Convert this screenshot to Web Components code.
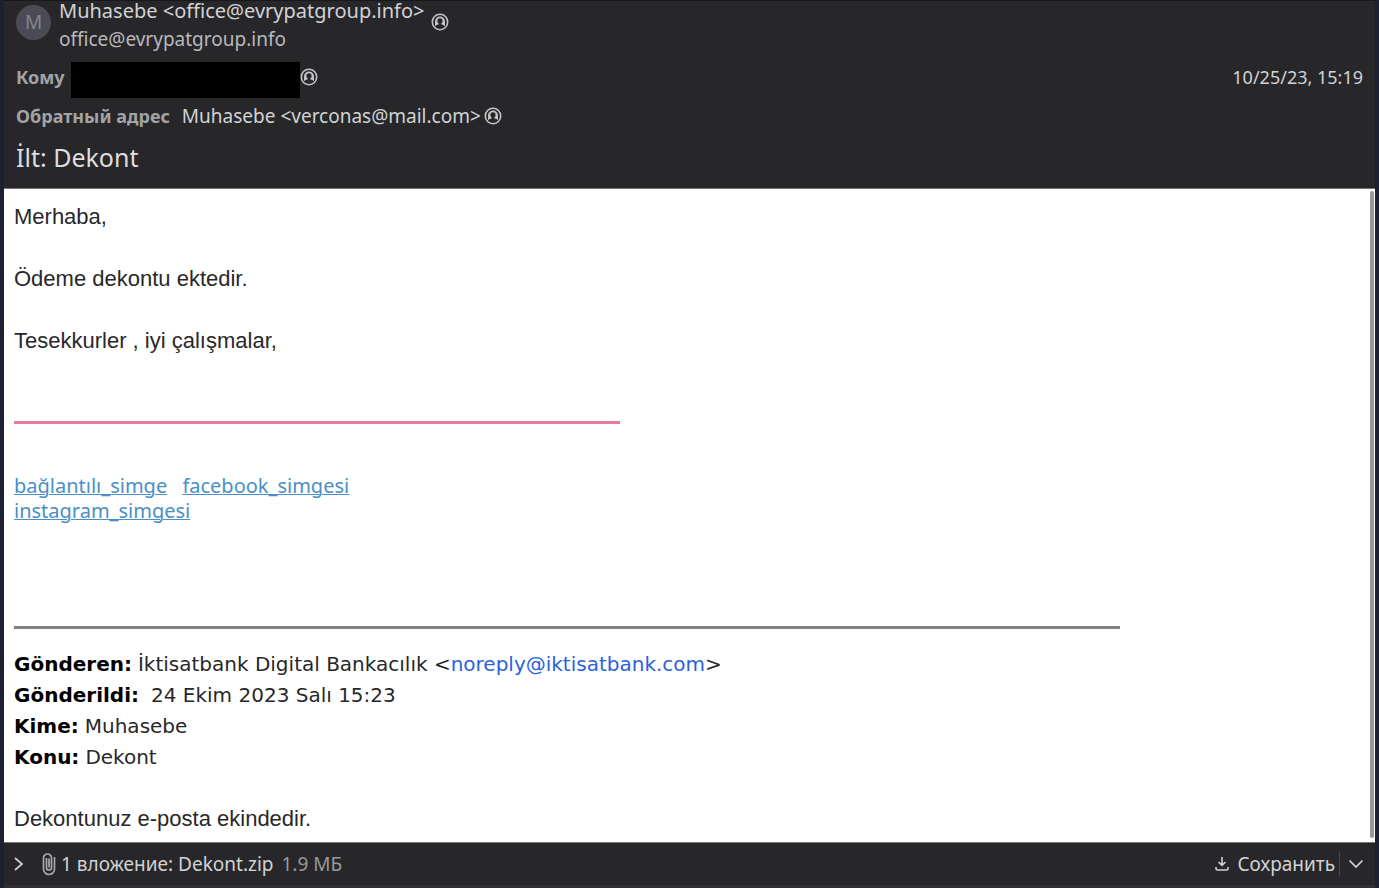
<!DOCTYPE html>
<html lang="ru">
<head>
<meta charset="utf-8">
<title>İlt: Dekont</title>
<style>
	body {
		margin: 0;
		background: #1d2030;
		font-family: "Noto Sans", sans-serif;
	}
</style>
</head>
<body>
<mail-window>
	<mail-header slot="header">
		<mail-sender slot="sender" initial="M">
			<span slot="name">Muhasebe &lt;office@evrypatgroup.info&gt;</span>
			<span slot="address">office@evrypatgroup.info</span>
		</mail-sender>
		<mail-field slot="fields" label="Кому" redacted>
			<time slot="end" datetime="2023-10-25T15:19">10/25/23, 15:19</time>
		</mail-field>
		<mail-field slot="fields" label="Обратный адрес">Muhasebe &lt;verconas@mail.com&gt;</mail-field>
		<span slot="subject">İlt: Dekont</span>
	</mail-header>
	<mail-message></mail-message>
	<mail-attachments slot="footer" name="Dekont.zip" size="1.9 МБ"></mail-attachments>
</mail-window>

<script>
class MailWindow extends HTMLElement {
	constructor() {
		super();
		this.attachShadow({ mode: 'open' });
		this.shadowRoot.innerHTML = `
			<style>
				:host {
					display: flex;
					flex-direction: column;
					box-sizing: border-box;
					min-height: 100vh;
					padding: 0 4px;
				}
				main {
					display: flex;
					flex: 1;
					background: #fff;
				}
				.content {
					flex: 1;
					min-width: 0;
				}
				.scrollbar {
					width: 4px;
					margin: 2px 1px 4px 0;
					border-radius: 2px;
					background: #98989a;
				}
			</style>
			<slot name="header"></slot>
			<main>
				<div class="content"><slot></slot></div>
				<div class="scrollbar"></div>
			</main>
			<slot name="footer"></slot>
		`;
	}
}

class MailHeader extends HTMLElement {
	constructor() {
		super();
		this.attachShadow({ mode: 'open' });
		this.shadowRoot.innerHTML = `
			<style>
				:host {
					display: block;
					padding: 0 12px 14px;
					border-top: 1px solid #18181c;
					border-bottom: 1px solid #77777a;
					background: #27272a;
					color: #d2d2d4;
					font-size: 19px;
				}
				.fields {
					display: flex;
					flex-direction: column;
					gap: 3px;
					margin-top: 13px;
				}
				h1 {
					margin: 10px 0 0;
					padding-bottom: 1px;
					font-size: 25px;
					font-weight: 400;
					line-height: 32px;
					color: #dededf;
				}
			</style>
			<slot name="sender"></slot>
			<div class="fields"><slot name="fields"></slot></div>
			<h1><slot name="subject"></slot></h1>
		`;
	}
}

class MailSender extends HTMLElement {
	constructor() {
		super();
		this.attachShadow({ mode: 'open' });
		this.shadowRoot.innerHTML = `
			<style>
				:host {
					display: flex;
					align-items: center;
				}
				.avatar {
					display: flex;
					align-items: center;
					justify-content: center;
					width: 35px;
					height: 35px;
					margin: 0 8px 6px 0;
					border-radius: 50%;
					background: #4b4b55;
					color: #85858f;
				}
				.names {
					display: flex;
					flex-direction: column;
					gap: 8px;
					font-size: 20px;
					line-height: 20px;
				}
				.address {
					color: #b9b9bc;
					font-size: 19px;
				}
				contact-button {
					margin: 0 0 6px 6px;
				}
			</style>
			<div class="avatar">${this.getAttribute('initial')}</div>
			<div class="names">
				<slot name="name"></slot>
				<div class="address"><slot name="address"></slot></div>
			</div>
			<contact-button></contact-button>
		`;
	}
}

class MailField extends HTMLElement {
	constructor() {
		super();
		const redacted = this.hasAttribute('redacted');
		this.attachShadow({ mode: 'open' });
		this.shadowRoot.innerHTML = `
			<style>
				:host {
					display: flex;
					line-height: 30px;
				}
				.label {
					margin-right: 12px;
					color: #a3a3a6;
					font-size: 18px;
					font-weight: 700;
				}
				:host([redacted]) .label {
					margin-right: 6px;
				}
				.redacted {
					width: 229px;
					height: 36px;
					background: #000;
				}
				contact-button {
					height: 30px;
					margin-left: 3px;
				}
				:host([redacted]) contact-button {
					margin-left: 0;
				}
				.end {
					margin-left: auto;
					font-size: 18px;
				}
			</style>
			<span class="label">${this.getAttribute('label')}</span>
			${redacted ? '<div class="redacted"></div>' : '<span><slot></slot></span>'}
			<contact-button></contact-button>
			<span class="end"><slot name="end"></slot></span>
		`;
	}
}

class ContactButton extends HTMLElement {
	constructor() {
		super();
		this.attachShadow({ mode: 'open' });
		this.shadowRoot.innerHTML = `
			<style>
				:host {
					display: flex;
					align-items: center;
				}
				button {
					display: block;
					padding: 0;
					border: 0;
					background: none;
					color: #c4c4c6;
				}
				svg {
					display: block;
				}
			</style>
			<button type="button" aria-label="Контакт">
				<svg width="18" height="18" viewBox="0 0 18 18">
					<circle cx="9" cy="9" r="7.7" fill="none" stroke="currentColor" stroke-width="1.6"/>
					<path d="M4 13V8.500a5 5 0 0 1 10 0V13z" fill="currentColor"/>
					<path d="M9 5.300a2.600 2.600 0 0 1 2.600 2.700c0 1.200-.5 1.900-1.300 2.500v.8l3 1.200v1.600H4.700v-1.600l3-1.200v-.8C6.900 9.900 6.400 9.200 6.400 8A2.600 2.600 0 0 1 9 5.300z" fill="#27272a"/>
				</svg>
			</button>
		`;
	}
}

class MailMessage extends HTMLElement {
	constructor() {
		super();
		this.attachShadow({ mode: 'open' });
		this.shadowRoot.innerHTML = `
			<style>
				:host {
					display: block;
					padding: 12px 10px 7px;
					color: #28282a;
					font: 22px/31px "Liberation Sans", Arial, sans-serif;
				}
				p {
					margin: 0 0 31px;
				}
				hr {
					margin: 0;
					border: 0;
					height: 3px;
				}
				.signature {
					max-width: 606px;
					margin-top: 65px;
					background: #e87a9c;
				}
				.quote {
					max-width: 1106px;
					margin-top: 103px;
					background: #808080;
				}
				.links {
					margin-top: 49px;
					font: 20px/25px "Noto Sans", sans-serif;
				}
				.links a {
					color: #4a8fc7;
					text-decoration-thickness: 1px;
					text-underline-offset: 1px;
				}
				.links a + a {
					margin-left: 10px;
				}
				dl {
					margin: 20px 0 30px;
					font: 20px/31px "DejaVu Sans", sans-serif;
				}
				dl div {
					display: flex;
					flex-wrap: wrap;
					gap: 0 6px;
				}
				dl .sent {
					gap: 0 12px;
				}
				dt {
					color: #000;
					font-weight: 700;
				}
				dd {
					margin: 0;
				}
				dd a {
					color: #2a62dd;
					text-decoration: none;
				}
				.last {
					margin: 0;
				}
			</style>
			<p>Merhaba,</p>
			<p>Ödeme dekontu ektedir.</p>
			<p>Tesekkurler , iyi çalışmalar,</p>
			<hr class="signature">
			<div class="links">
				<div><a href="#link">bağlantılı_simge</a> <a href="#facebook">facebook_simgesi</a></div>
				<div><a href="#instagram">instagram_simgesi</a></div>
			</div>
			<hr class="quote">
			<dl>
				<div><dt>Gönderen:</dt><dd>İktisatbank Digital Bankacılık &lt;<a href="mailto:noreply@iktisatbank.com">noreply@iktisatbank.com</a>&gt;</dd></div>
				<div class="sent"><dt>Gönderildi:</dt><dd>24 Ekim 2023 Salı 15:23</dd></div>
				<div><dt>Kime:</dt><dd>Muhasebe</dd></div>
				<div><dt>Konu:</dt><dd>Dekont</dd></div>
			</dl>
			<p class="last">Dekontunuz e-posta ekindedir.</p>
		`;
	}
}

class MailAttachments extends HTMLElement {
	constructor() {
		super();
		this.attachShadow({ mode: 'open' });
		this.shadowRoot.innerHTML = `
			<style>
				:host {
					display: flex;
					align-items: center;
					justify-content: space-between;
					padding: 6px 11px 6px 8px;
					border-top: 1px solid #77777a;
					border-bottom: 3px solid #303034;
					background: #27272a;
					color: #d2d2d4;
					font-size: 19px;
					line-height: 30px;
				}
				button {
					display: flex;
					align-items: center;
					padding: 0;
					border: 0;
					background: none;
					color: inherit;
					font: inherit;
				}
				.expand svg:first-child {
					margin-right: 16px;
				}
				.expand svg + svg {
					margin-right: 5px;
				}
				.size {
					margin-left: 8px;
					color: #98989b;
				}
				.actions {
					display: flex;
					align-items: center;
				}
				.save {
					gap: 8px;
				}
				.menu {
					padding: 4px 0 4px 8px;
					margin-left: 4px;
					border-left: 1px solid #48484c;
				}
			</style>
			<button type="button" class="expand" aria-expanded="false">
				<svg width="14" height="18" viewBox="0 0 14 18" fill="none" stroke="currentColor" stroke-width="1.700">
					<path d="M3 3l7 6l-7 6"/>
				</svg>
				<svg width="14" height="24" viewBox="0 0 14 24" fill="none" stroke="#a9a9ac" stroke-width="1.700">
					<path d="M4.500 6v9.500a2.500 2.500 0 0 0 5 0V6a4 4 0 0 0-4-4A4 4 0 0 0 1.500 6v11a5.500 5.500 0 0 0 11 0V5M7 6.500v9"/>
				</svg>
				<span>1 вложение: ${this.getAttribute('name')}</span>
				<span class="size">${this.getAttribute('size')}</span>
			</button>
			<div class="actions">
				<button type="button" class="save">
					<svg width="14" height="16" viewBox="0 0 14 16" fill="none" stroke="currentColor" stroke-width="1.600">
						<path d="M7 1v8M3.500 6L7 9.300L10.500 6M1 11v1.500q0 1.500 1.500 1.500h9q1.500 0 1.500-1.500V11"/>
					</svg>
					<span>Сохранить</span>
				</button>
				<button type="button" class="menu" aria-label="Другие действия">
					<svg width="16" height="16" viewBox="0 0 16 16" fill="none" stroke="currentColor" stroke-width="1.700">
						<path d="M1.500 4.500L8 11l6.500-6.500"/>
					</svg>
				</button>
			</div>
		`;
	}
}

customElements.define('contact-button', ContactButton);
customElements.define('mail-sender', MailSender);
customElements.define('mail-field', MailField);
customElements.define('mail-header', MailHeader);
customElements.define('mail-message', MailMessage);
customElements.define('mail-attachments', MailAttachments);
customElements.define('mail-window', MailWindow);
</script>
</body>
</html>
